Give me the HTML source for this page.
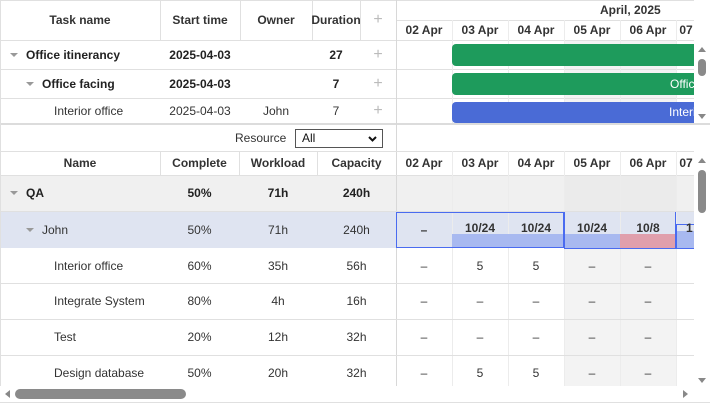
<!DOCTYPE html>
<html><head><meta charset="utf-8"><style>
*{box-sizing:border-box;margin:0;padding:0}
body{width:710px;height:403px;overflow:hidden;background:#fff;font-family:"Liberation Sans",Arial,sans-serif;font-size:12px;color:#333;position:relative}
.a{position:absolute}
.t{position:absolute;display:flex;align-items:center;justify-content:center;white-space:nowrap}
.b{font-weight:bold}
.hl{position:absolute;height:1px;background:#e0e0e0}
.vl{position:absolute;width:1px;background:#e0e0e0}
.arr{display:inline-block;width:0;height:0;border-left:4px solid transparent;border-right:4px solid transparent;border-top:4px solid #999;margin-right:8px}
.plus{color:#bbb;font-size:16px;font-weight:normal}
</style></head><body>

<div class="a" style="left:564px;top:40px;width:112px;height:83px;background:#f3f3f3"></div>
<div class="a" style="left:564px;top:175px;width:112px;height:211px;background:#f3f3f3"></div>
<div class="a" style="left:0;top:175px;width:694px;height:36px;background:#f0f0f0"></div>
<div class="a" style="left:564px;top:175px;width:112px;height:36px;background:#ebebeb"></div>
<div class="a" style="left:0;top:211px;width:694px;height:37px;background:#dfe4f1"></div>

<div class="hl" style="left:0;top:0;width:694px"></div>
<div class="hl" style="left:396px;top:20px;width:298px"></div>
<div class="hl" style="left:0;top:40px;width:694px"></div>
<div class="hl" style="left:0;top:69px;width:694px"></div>
<div class="hl" style="left:0;top:98px;width:694px"></div>
<div class="a" style="left:0;top:123px;width:710px;height:2px;background:#dcdcdc"></div>
<div class="vl" style="left:0;top:0;height:403px"></div>
<div class="vl" style="left:160px;top:0;height:40px"></div>
<div class="vl" style="left:240px;top:0;height:40px"></div>
<div class="vl" style="left:312px;top:0;height:40px"></div>
<div class="vl" style="left:360px;top:0;height:40px"></div>
<div class="vl" style="left:396px;top:0;height:386px;background:#d8d8d8"></div>
<div class="vl" style="left:452px;top:20px;height:103px;background:#ececec"></div>
<div class="vl" style="left:508px;top:20px;height:103px;background:#ececec"></div>
<div class="vl" style="left:564px;top:20px;height:103px;background:#ececec"></div>
<div class="vl" style="left:620px;top:20px;height:103px;background:#ececec"></div>
<div class="vl" style="left:676px;top:20px;height:103px;background:#ececec"></div>

<div class="t b" style="left:0;top:0;width:160px;height:40px">Task name</div>
<div class="t b" style="left:160px;top:0;width:80px;height:40px">Start time</div>
<div class="t b" style="left:240px;top:0;width:72px;height:40px">Owner</div>
<div class="t b" style="left:312px;top:0;width:48px;height:40px">Duration</div>
<div class="t plus" style="left:360px;top:0;width:36px;height:40px">+</div>
<div class="t b" style="left:600px;top:0;width:114px;height:20px;justify-content:flex-start">April, 2025</div>
<div class="t b" style="left:396px;top:20px;width:56px;height:20px">02 Apr</div>
<div class="t b" style="left:452px;top:20px;width:56px;height:20px">03 Apr</div>
<div class="t b" style="left:508px;top:20px;width:56px;height:20px">04 Apr</div>
<div class="t b" style="left:564px;top:20px;width:56px;height:20px">05 Apr</div>
<div class="t b" style="left:620px;top:20px;width:56px;height:20px">06 Apr</div>
<div class="t b" style="left:676px;top:20px;width:18px;height:20px;overflow:hidden;justify-content:flex-start">&nbsp;07</div>

<div class="t b" style="left:10px;top:40px;height:29px;color:#222"><span class="arr"></span>Office itinerancy</div>
<div class="t b" style="left:160px;top:40px;width:80px;height:29px;color:#222">2025-04-03</div>
<div class="t b" style="left:312px;top:40px;width:48px;height:29px;color:#222">27</div>
<div class="t plus" style="left:360px;top:40px;width:36px;height:29px">+</div>
<div class="t b" style="left:26px;top:69px;height:29px;color:#222"><span class="arr"></span>Office facing</div>
<div class="t b" style="left:160px;top:69px;width:80px;height:29px;color:#222">2025-04-03</div>
<div class="t b" style="left:312px;top:69px;width:48px;height:29px;color:#222">7</div>
<div class="t plus" style="left:360px;top:69px;width:36px;height:29px">+</div>
<div class="t" style="left:54px;top:98px;height:25px">Interior office</div>
<div class="t" style="left:160px;top:98px;width:80px;height:25px">2025-04-03</div>
<div class="t" style="left:240px;top:98px;width:72px;height:25px">John</div>
<div class="t" style="left:312px;top:98px;width:48px;height:25px">7</div>
<div class="t plus" style="left:360px;top:98px;width:36px;height:25px">+</div>

<div class="a" style="left:452px;top:44px;width:250px;height:22px;background:#1e9b5c;border-radius:4px"></div>
<div class="a" style="left:452px;top:73px;width:250px;height:22px;background:#1e9b5c;border-radius:4px;color:#fff;line-height:22px;padding-left:218px;overflow:hidden;white-space:nowrap">Office</div>
<div class="a" style="left:452px;top:102px;width:250px;height:21px;background:#4a6bd6;border-radius:4px;color:#fff;line-height:21px;padding-left:217px;overflow:hidden;white-space:nowrap">Interior</div>

<div class="t" style="left:235px;top:125px;height:26px">Resource</div>
<div class="a" style="left:295px;top:129px;width:88px;height:19px;border:1px solid #555;padding-left:6px;line-height:17px;color:#111">All
<svg style="position:absolute;right:5px;top:6px" width="9" height="6" viewBox="0 0 9 6"><path d="M1 1L4.5 4.5L8 1" fill="none" stroke="#111" stroke-width="2"/></svg></div>

<div class="hl" style="left:0;top:151px;width:694px"></div>
<div class="hl" style="left:0;top:175px;width:694px"></div>
<div class="vl" style="left:160px;top:151px;height:24px"></div>
<div class="vl" style="left:239px;top:151px;height:24px"></div>
<div class="vl" style="left:317px;top:151px;height:24px"></div>
<div class="t b" style="left:0;top:151px;width:160px;height:24px">Name</div>
<div class="t b" style="left:160px;top:151px;width:79px;height:24px">Complete</div>
<div class="t b" style="left:239px;top:151px;width:78px;height:24px">Workload</div>
<div class="t b" style="left:317px;top:151px;width:79px;height:24px">Capacity</div>
<div class="t b" style="left:396px;top:151px;width:56px;height:24px">02 Apr</div>
<div class="t b" style="left:452px;top:151px;width:56px;height:24px">03 Apr</div>
<div class="t b" style="left:508px;top:151px;width:56px;height:24px">04 Apr</div>
<div class="t b" style="left:564px;top:151px;width:56px;height:24px">05 Apr</div>
<div class="t b" style="left:620px;top:151px;width:56px;height:24px">06 Apr</div>
<div class="t b" style="left:676px;top:151px;width:18px;height:24px;overflow:hidden;justify-content:flex-start">&nbsp;07</div>
<div class="vl" style="left:452px;top:151px;height:235px;background:#ececec"></div>
<div class="vl" style="left:508px;top:151px;height:235px;background:#ececec"></div>
<div class="vl" style="left:564px;top:151px;height:235px;background:#ececec"></div>
<div class="vl" style="left:620px;top:151px;height:235px;background:#ececec"></div>
<div class="vl" style="left:676px;top:151px;height:235px;background:#ececec"></div>

<div class="hl" style="left:0;top:211px;width:694px"></div>
<div class="hl" style="left:0;top:283px;width:694px"></div>
<div class="hl" style="left:0;top:319px;width:694px"></div>
<div class="hl" style="left:0;top:355px;width:694px"></div>

<div class="a" style="left:452px;top:234px;width:112px;height:14px;background:#a8b9f0"></div>
<div class="a" style="left:564px;top:234px;width:56px;height:14px;background:#a8b9f0"></div>
<div class="a" style="left:620px;top:234px;width:56px;height:14px;background:#e09fac"></div>
<div class="a" style="left:676px;top:231px;width:18px;height:17px;background:#a8b9f0"></div>
<div class="a" style="left:396px;top:212px;width:168px;height:36px;border:1px solid #4a6bf0"></div>
<div class="a" style="left:564px;top:212px;width:112px;height:37px;border:1px solid #4a6bf0;border-top:none"></div>
<div class="a" style="left:676px;top:224px;width:20px;height:25px;border:1px solid #4a6bf0"></div>

<div class="t b" style="left:10px;top:175px;height:36px;color:#222"><span class="arr"></span>QA</div>
<div class="t b" style="left:160px;top:175px;width:79px;height:36px;color:#222">50%</div>
<div class="t b" style="left:239px;top:175px;width:78px;height:36px;color:#222">71h</div>
<div class="t b" style="left:317px;top:175px;width:79px;height:36px;color:#222">240h</div>

<div class="t" style="left:26px;top:211px;height:37px"><span class="arr"></span>John</div>
<div class="t" style="left:160px;top:211px;width:79px;height:37px">50%</div>
<div class="t" style="left:239px;top:211px;width:78px;height:37px">71h</div>
<div class="t" style="left:317px;top:211px;width:79px;height:37px">240h</div>
<div class="t b" style="left:396px;top:211px;width:56px;height:37px">–</div>
<div class="t b" style="left:452px;top:211px;width:56px;height:37px;padding-bottom:4px">10/24</div>
<div class="t b" style="left:508px;top:211px;width:56px;height:37px;padding-bottom:4px">10/24</div>
<div class="t b" style="left:564px;top:211px;width:56px;height:37px;padding-bottom:4px">10/24</div>
<div class="t b" style="left:620px;top:211px;width:56px;height:37px;padding-bottom:4px">10/8</div>
<div class="t b" style="left:686px;top:211px;width:8px;height:37px;padding-bottom:4px;overflow:hidden;justify-content:flex-start">1</div>

<div class="t" style="left:54px;top:248px;height:35px">Interior office</div>
<div class="t" style="left:160px;top:248px;width:79px;height:35px">60%</div>
<div class="t" style="left:239px;top:248px;width:78px;height:35px">35h</div>
<div class="t" style="left:317px;top:248px;width:79px;height:35px">56h</div>
<div class="t" style="left:396px;top:248px;width:56px;height:35px">–</div>
<div class="t" style="left:452px;top:248px;width:56px;height:35px">5</div>
<div class="t" style="left:508px;top:248px;width:56px;height:35px">5</div>
<div class="t" style="left:564px;top:248px;width:56px;height:35px">–</div>
<div class="t" style="left:620px;top:248px;width:56px;height:35px">–</div>

<div class="t" style="left:54px;top:283px;height:36px">Integrate System</div>
<div class="t" style="left:160px;top:283px;width:79px;height:36px">80%</div>
<div class="t" style="left:239px;top:283px;width:78px;height:36px">4h</div>
<div class="t" style="left:317px;top:283px;width:79px;height:36px">16h</div>
<div class="t" style="left:396px;top:283px;width:56px;height:36px">–</div>
<div class="t" style="left:452px;top:283px;width:56px;height:36px">–</div>
<div class="t" style="left:508px;top:283px;width:56px;height:36px">–</div>
<div class="t" style="left:564px;top:283px;width:56px;height:36px">–</div>
<div class="t" style="left:620px;top:283px;width:56px;height:36px">–</div>

<div class="t" style="left:54px;top:319px;height:36px">Test</div>
<div class="t" style="left:160px;top:319px;width:79px;height:36px">20%</div>
<div class="t" style="left:239px;top:319px;width:78px;height:36px">12h</div>
<div class="t" style="left:317px;top:319px;width:79px;height:36px">32h</div>
<div class="t" style="left:396px;top:319px;width:56px;height:36px">–</div>
<div class="t" style="left:452px;top:319px;width:56px;height:36px">–</div>
<div class="t" style="left:508px;top:319px;width:56px;height:36px">–</div>
<div class="t" style="left:564px;top:319px;width:56px;height:36px">–</div>
<div class="t" style="left:620px;top:319px;width:56px;height:36px">–</div>

<div class="t" style="left:54px;top:355px;height:36px">Design database</div>
<div class="t" style="left:160px;top:355px;width:79px;height:36px">50%</div>
<div class="t" style="left:239px;top:355px;width:78px;height:36px">20h</div>
<div class="t" style="left:317px;top:355px;width:79px;height:36px">32h</div>
<div class="t" style="left:396px;top:355px;width:56px;height:36px">–</div>
<div class="t" style="left:452px;top:355px;width:56px;height:36px">5</div>
<div class="t" style="left:508px;top:355px;width:56px;height:36px">5</div>
<div class="t" style="left:564px;top:355px;width:56px;height:36px">–</div>
<div class="t" style="left:620px;top:355px;width:56px;height:36px">–</div>

<div class="a" style="left:694px;top:40px;width:16px;height:83px;background:#fff"></div>
<div class="a" style="left:698px;top:47px;border-left:4px solid transparent;border-right:4px solid transparent;border-bottom:5px solid #888"></div>
<div class="a" style="left:698px;top:59px;width:8px;height:17px;background:#8a8a8a;border-radius:4px"></div>
<div class="a" style="left:698px;top:114px;border-left:4px solid transparent;border-right:4px solid transparent;border-top:5px solid #888"></div>
<div class="a" style="left:694px;top:151px;width:16px;height:235px;background:#fff"></div>
<div class="a" style="left:698px;top:158px;border-left:4px solid transparent;border-right:4px solid transparent;border-bottom:5px solid #888"></div>
<div class="a" style="left:698px;top:170px;width:8px;height:43px;background:#8a8a8a;border-radius:4px"></div>
<div class="a" style="left:698px;top:378px;border-left:4px solid transparent;border-right:4px solid transparent;border-top:5px solid #888"></div>
<div class="a" style="left:0;top:386px;width:710px;height:17px;background:#fff"></div>
<div class="hl" style="left:0;top:402px;width:710px"></div>
<div class="a" style="left:5px;top:390px;border-top:4px solid transparent;border-bottom:4px solid transparent;border-right:5px solid #888"></div>
<div class="a" style="left:15px;top:389px;width:171px;height:10px;background:#8a8a8a;border-radius:5px"></div>
<div class="a" style="left:683px;top:390px;border-top:4px solid transparent;border-bottom:4px solid transparent;border-left:5px solid #888"></div>
</body></html>
